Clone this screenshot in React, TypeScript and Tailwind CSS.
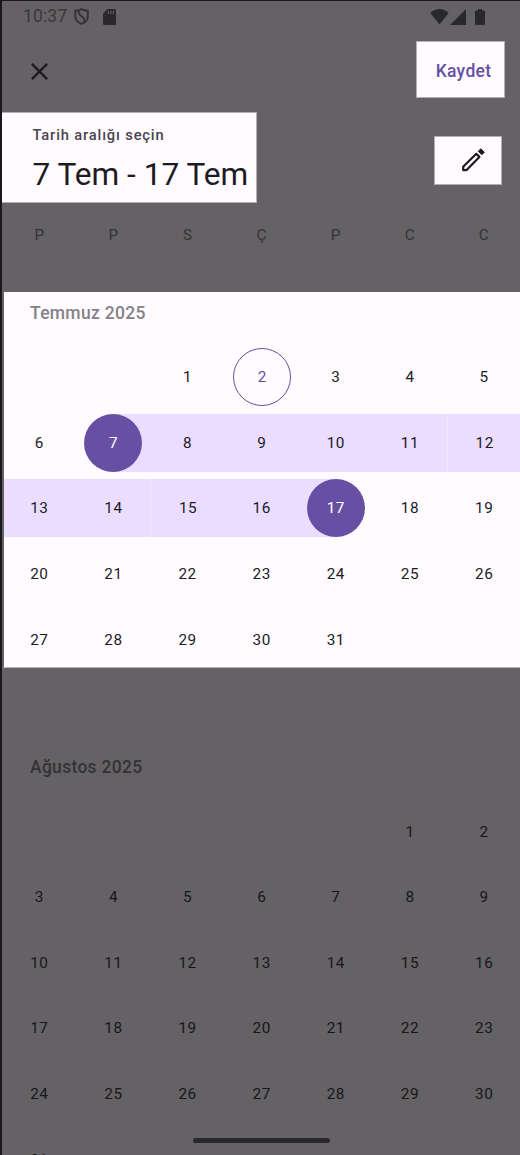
import React from "react";

type Mark = "today" | "start" | "end" | "mid";

const WEEKDAYS = ["P", "P", "S", "Ç", "P", "C", "C"];

function buildCells(offset: number, count: number): (number | null)[] {
  const cells: (number | null)[] = [];
  for (let i = 0; i < offset; i++) cells.push(null);
  for (let d = 1; d <= count; d++) cells.push(d);
  return cells;
}

function julyMark(day: number): Mark | undefined {
  if (day === 2) return "today";
  if (day === 7) return "start";
  if (day === 17) return "end";
  if (day > 7 && day < 17) return "mid";
  return undefined;
}

const BAND: Record<Mark, string> = {
  today: "",
  start: "bg-linear-to-r from-transparent from-50% to-[#eaddff] to-50%",
  end: "bg-linear-to-r from-[#eaddff] from-50% to-transparent to-50%",
  mid: "bg-[#eaddff]",
};

const DISC: Record<Mark, string> = {
  today: "ml-px border-[1.4px] border-[#6750a4] text-[#6750a4]",
  start: "bg-[#6750a4] text-white",
  end: "bg-[#6750a4] text-white",
  mid: "",
};

function Day({ day, mark }: { day: number | null; mark?: Mark }) {
  const seam = day === 12 || day === 15 ? "border-l border-[#f1e8ff]" : "";
  return (
    <div className="flex h-[65.6px] items-center">
      <div className={`flex h-[58px] w-full items-center justify-center ${mark ? BAND[mark] : ""} ${mark ? seam : ""}`}>
        {day !== null && (
          <span className={`flex size-[58px] shrink-0 items-center justify-center rounded-full pt-px pl-[0.5px] ${mark ? DISC[mark] : ""}`}>
            {day}
          </span>
        )}
      </div>
    </div>
  );
}

function Month({ cells, marks }: { cells: (number | null)[]; marks?: (day: number) => Mark | undefined }) {
  return (
    <div className="grid grid-cols-7 text-[15.3px] tracking-[0.55px]">
      {cells.map((day, i) => (
        <Day key={i} day={day} mark={day !== null && marks ? marks(day) : undefined} />
      ))}
    </div>
  );
}

function StatusBar() {
  return (
    <div className="flex h-[31px] shrink-0 items-center pl-[21px] text-[#3a383b]">
      <span className="w-[51px] text-[17.6px] leading-none tracking-[0.1px]">10:37</span>
      <svg className="h-[17px] w-[15px]" viewBox="0 0 15 17" fill="none" stroke="#343235" strokeWidth="1.9">
        <path d="M7.5 1.1 C5.8 2.3 3.5 2.6 1.2 2.7 V8 C1.2 11.8 4 14.7 7.5 15.9 C11 14.7 13.8 11.8 13.8 8 V2.7 C11.5 2.6 9.2 2.3 7.5 1.1 Z" />
        <path d="M4.6 2.5 C4.2 6 5.6 7 7.6 8.3 C9.8 9.7 10.7 11 10.2 14" />
      </svg>
      <svg className="ml-[14px] h-[16px] w-[13px]" viewBox="0 0 13 16">
        <path fill="#29282a" d="M4.6 0 H11.5 Q13 0 13 1.5 V14.5 Q13 16 11.5 16 H1.5 Q0 16 0 14.5 V4.6 Z" />
        <path stroke="#656266" strokeWidth="1.1" d="M5.4 2 V5 M7.9 2 V5 M10.4 2 V5" />
      </svg>
      <svg className="ml-[314px] h-[16px] w-[19px]" viewBox="0 0 19 16" fill="#29282a">
        <path d="M9.5 15.5 L0.3 4 C5.6 -1.2 13.4 -1.2 18.7 4 Z" />
      </svg>
      <svg className="ml-px h-[16px] w-[16px]" viewBox="0 0 16 16" fill="#29282a">
        <path d="M0 16 L16 0 V16 Z" />
      </svg>
      <svg className="ml-[9px] h-[16px] w-[10px]" viewBox="0 0 10 16" fill="#29282a">
        <path d="M3 0 H7 V1.6 H8.8 Q10 1.6 10 2.8 V14.8 Q10 16 8.8 16 H1.2 Q0 16 0 14.8 V2.8 Q0 1.6 1.2 1.6 H3 Z" />
      </svg>
    </div>
  );
}

export default function App() {
  return (
    <div className="h-[1155px] w-[520px] overflow-hidden bg-[#19171c] pt-px pl-[2px] font-[Roboto,sans-serif]">
      <div className="relative flex h-[1154px] w-[519px] flex-col overflow-hidden bg-[#656266] text-[#1c1b1f]">
        <StatusBar />

        <div className="flex h-[80px] shrink-0 items-start pt-[9px]">
          <button aria-label="Kapat" className="mt-[16px] ml-[23px] size-[29px]">
            <svg viewBox="0 0 24 24" className="size-[29px]" fill="#1e1c20">
              <path d="M19 6.41 17.59 5 12 10.59 6.41 5 5 6.41 10.59 12 5 17.59 6.41 19 12 13.41 17.59 19 19 17.59 13.41 12z" />
            </svg>
          </button>
          <button className="ml-[362px] flex h-[57px] w-[89px] items-center justify-center border border-[#b3b0b4] bg-[#fffbff] pt-[3px] pl-[6px] text-[17.5px] font-medium tracking-[0.3px] text-[#6750a4]">
            Kaydet
          </button>
        </div>

        <div className="flex h-[91px] shrink-0 items-start">
          <div className="h-[91px] w-[255px] border-y border-r border-[#b3b0b4] bg-[#fffbff] pt-[13px] pl-[30.5px] whitespace-nowrap">
            <div className="text-[14.7px] leading-[18px] font-medium tracking-[0.85px] text-[#49454f]">Tarih aralığı seçin</div>
            <div className="mt-[12px] text-[31.6px] leading-[38px]">7 Tem - 17 Tem</div>
          </div>
          <button aria-label="Düzenle" className="mt-[24px] ml-[177px] flex h-[49px] w-[68px] items-center border border-[#b3b0b4] bg-[#fffbff] pl-[26px]">
            <svg viewBox="0 0 26 26" className="size-[26px]" stroke="#1c1b1f" strokeLinejoin="round">
              <path fill="none" strokeWidth="2.2" d="M2.2 22.1 V18.7 L15.3 5.8 L18.4 8.9 L5.6 22.1 Z" />
              <path fill="#1c1b1f" strokeWidth="1" d="M17.3 3.3 L19.8 0.8 L23.3 4.2 L20.8 6.8 Z" />
            </svg>
          </button>
        </div>

        <div className="grid h-[89px] shrink-0 grid-cols-7 pt-[22px] pl-[0.5px] text-center text-[15.3px] leading-[20px] tracking-[0.5px] text-[#343236]">
          {WEEKDAYS.map((d, i) => (
            <span key={i}>{d}</span>
          ))}
        </div>

        <section className="h-[376px] shrink-0 overflow-clip border-b border-l-2 border-b-[#b3b0b4] border-l-[#656266] bg-[#fffbff]">
          <div className="-ml-[2px]">
            <h2 className="h-[52.4px] pt-[10px] pl-[28px] text-[17.5px] leading-[22px] font-medium tracking-[0.3px] text-[#858187]">Temmuz 2025</h2>
            <Month cells={buildCells(2, 31)} marks={julyMark} />
          </div>
        </section>

        <section className="shrink-0 text-[#171619]">
          <h2 className="h-[130.8px] pt-[88px] pl-[28px] text-[17.5px] leading-[22px] font-medium tracking-[0.3px] text-[#343236]">Ağustos 2025</h2>
          <Month cells={buildCells(5, 31)} />
        </section>

        <div className="absolute top-[1137px] left-[191px] h-[5px] w-[137px] rounded-full bg-[#29282a]" />
      </div>
    </div>
  );
}
